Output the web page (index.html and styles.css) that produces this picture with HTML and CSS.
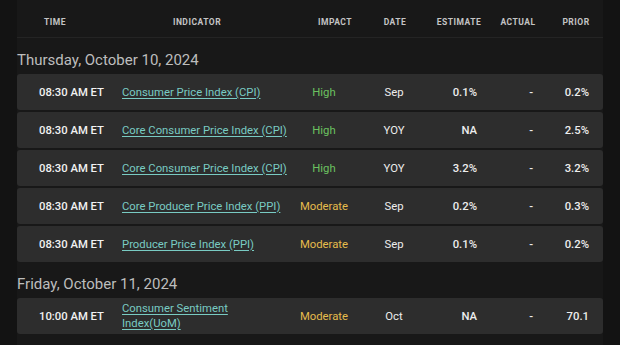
FILE: index.html
```html
<!DOCTYPE html>
<html>
<head>
<meta charset="utf-8">
<link rel="stylesheet" href="styles.css">
</head>
<body>
<div class="page">
  <div class="head">
    <div class="h h-time">Time</div>
    <div class="h h-ind">Indicator</div>
    <div class="h h-imp">Impact</div>
    <div class="h h-date">Date</div>
    <div class="h h-est">Estimate</div>
    <div class="h h-act">Actual</div>
    <div class="h h-prior">Prior</div>
  </div>

  <div class="day">Thursday, October 10, 2024</div>
  <div class="rows">
    <div class="row">
      <div class="c time">08:30 AM ET</div>
      <div class="c ind"><a href="#">Consumer Price Index (CPI)</a></div>
      <div class="c imp high">High</div>
      <div class="c date">Sep</div>
      <div class="c num">0.1%</div>
      <div class="c num">-</div>
      <div class="c num">0.2%</div>
    </div>
    <div class="row">
      <div class="c time">08:30 AM ET</div>
      <div class="c ind"><a href="#">Core Consumer Price Index (CPI)</a></div>
      <div class="c imp high">High</div>
      <div class="c date">YOY</div>
      <div class="c num">NA</div>
      <div class="c num">-</div>
      <div class="c num">2.5%</div>
    </div>
    <div class="row">
      <div class="c time">08:30 AM ET</div>
      <div class="c ind"><a href="#">Core Consumer Price Index (CPI)</a></div>
      <div class="c imp high">High</div>
      <div class="c date">YOY</div>
      <div class="c num">3.2%</div>
      <div class="c num">-</div>
      <div class="c num">3.2%</div>
    </div>
    <div class="row">
      <div class="c time">08:30 AM ET</div>
      <div class="c ind"><a href="#">Core Producer Price Index (PPI)</a></div>
      <div class="c imp mod">Moderate</div>
      <div class="c date">Sep</div>
      <div class="c num">0.2%</div>
      <div class="c num">-</div>
      <div class="c num">0.3%</div>
    </div>
    <div class="row">
      <div class="c time">08:30 AM ET</div>
      <div class="c ind"><a href="#">Producer Price Index (PPI)</a></div>
      <div class="c imp mod">Moderate</div>
      <div class="c date">Sep</div>
      <div class="c num">0.1%</div>
      <div class="c num">-</div>
      <div class="c num">0.2%</div>
    </div>
  </div>

  <div class="day">Friday, October 11, 2024</div>
  <div class="rows">
    <div class="row">
      <div class="c time">10:00 AM ET</div>
      <div class="c ind wrap"><a href="#">Consumer Sentiment Index(UoM)</a></div>
      <div class="c imp mod">Moderate</div>
      <div class="c date">Oct</div>
      <div class="c num">NA</div>
      <div class="c num">-</div>
      <div class="c num">70.1</div>
    </div>
  </div>
</div>
</body>
</html>
```

FILE: styles.css
```css
* { box-sizing: border-box; }
html, body {
  margin: 0;
  padding: 0;
  background: #131313;
  font-family: Roboto, "Liberation Sans", sans-serif;
  color: #ededed;
}
body { padding: 0 17px; height: 345px; overflow: hidden; }
.page {
  background: #181818;
  min-height: 345px;
}
.head {
  display: grid;
  grid-template-columns: 76px 208px 68px 52px 76px 42px 64px;
  height: 38px;
  align-items: center;
  border-bottom: 1px solid #242424;
  padding-top: 6px;
}
.h {
  text-align: center;
  text-transform: uppercase;
  font-size: 8.5px;
  font-weight: 700;
  letter-spacing: 0.5px;
  color: #c4c4c4;
}
.h-prior { padding-left: 10px; }
.day {
  font-size: 15px;
  line-height: 18px;
  color: #bdbdbd;
  margin: 13px 0 5px;
}
.rows {
  display: flex;
  flex-direction: column;
  gap: 2px;
}
.row {
  display: grid;
  grid-template-columns: 95px 178px 68px 72px 47px 56px 56px;
  align-items: center;
  min-height: 36px;
  background: #2d2d2d;
  border-radius: 3px;
  font-size: 11.3px;
  line-height: 15px;
  padding: 3px 0;
}
.c { white-space: nowrap; }
.time { text-align: right; padding-right: 8px; font-weight: 500; color: #f2f2f2; }
.ind { padding-left: 10px; }
.ind.wrap { white-space: normal; max-width: 130px; box-sizing: content-box; }
.ind a { color: #79cbc3; text-decoration: underline; text-underline-offset: 2px; }
.imp { text-align: center; }
.high { color: #6cc160; }
.mod { color: #e6bc4c; }
.date { text-align: center; }
.num { text-align: right; font-weight: 500; }
```
